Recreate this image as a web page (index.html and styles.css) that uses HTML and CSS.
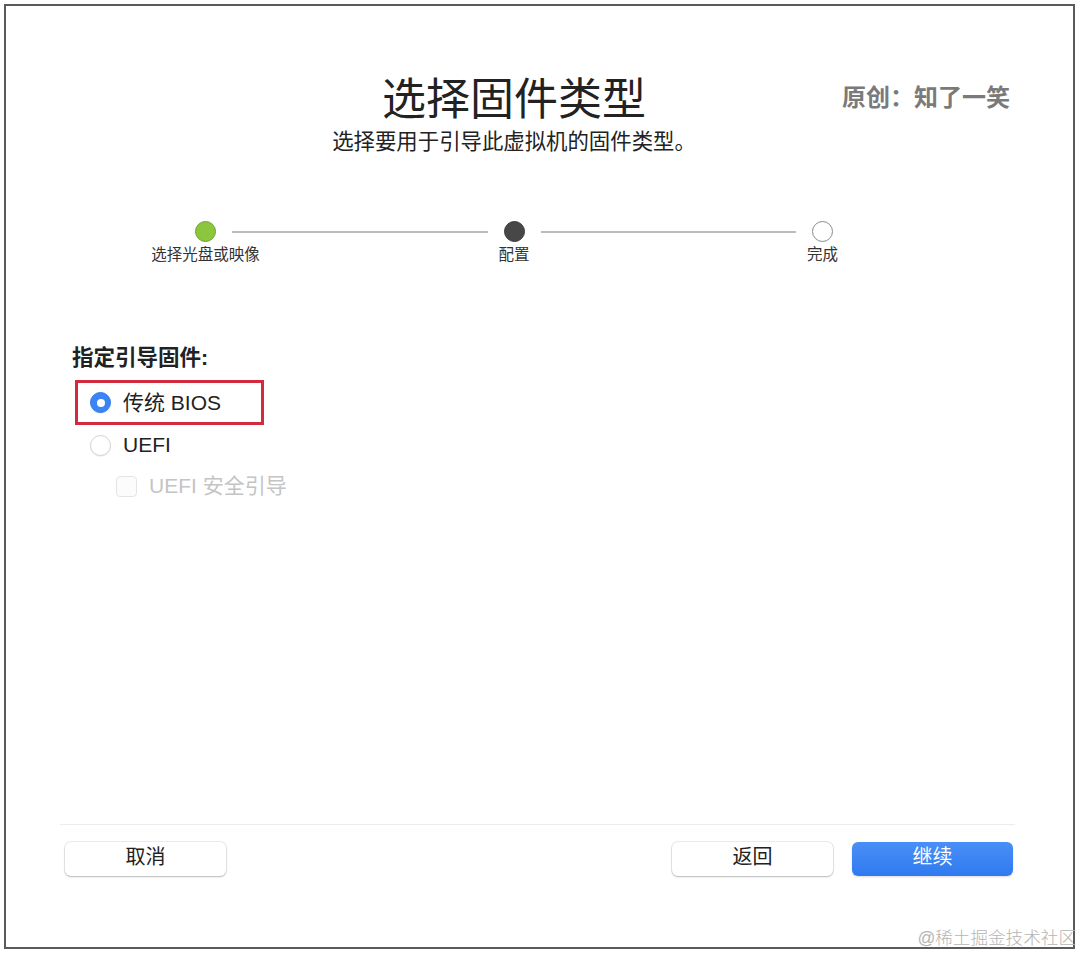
FILE: index.html
```html
<!DOCTYPE html>
<html lang="zh-CN">
<head>
    <meta charset="UTF-8">
    <meta name="viewport" content="width=device-width, initial-scale=1.0">
    <title>选择固件类型</title>
    <link rel="stylesheet" href="styles.css">
</head>
<body>
    <div class="frame">
        <div class="top">
            <header class="head">
                <div></div>
                <h1 class="title">选择固件类型</h1>
                <div class="author">原创：知了一笑</div>
            </header>
            <p class="subtitle">选择要用于引导此虚拟机的固件类型。</p>

            <div class="steps">
                <span class="dot done"></span>
                <span class="line"></span>
                <span class="dot current"></span>
                <span class="line"></span>
                <span class="dot"></span>
                <span class="stepLabel">选择光盘或映像</span>
                <span></span>
                <span class="stepLabel">配置</span>
                <span></span>
                <span class="stepLabel">完成</span>
            </div>
        </div>

        <div class="form">
            <h2 class="formTitle">指定引导固件:</h2>
            <div class="highlight">
                <div class="option">
                    <span class="radio checked"></span>
                    <span>传统 BIOS</span>
                </div>
            </div>
            <div class="option plain">
                <span class="radio"></span>
                <span>UEFI</span>
            </div>
            <div class="option sub disabled">
                <span class="checkbox"></span>
                <span>UEFI 安全引导</span>
            </div>
        </div>

        <footer class="footer">
            <button class="btn">取消</button>
            <div class="spacer"></div>
            <button class="btn">返回</button>
            <button class="btn primary">继续</button>
        </footer>
    </div>
    <div class="watermark">@稀土掘金技术社区</div>
</body>
</html>
```

FILE: styles.css
```css
* {
    margin: 0;
    padding: 0;
    box-sizing: border-box;
    font-family: "Liberation Sans", "Noto Sans CJK SC", sans-serif;
}
body {
    background-color: #fff;
    width: 1082px;
    height: 954px;
    position: relative;
    overflow: hidden;
}
.frame {
    margin: 4px;
    width: 1071px;
    height: 945px;
    border: 2px solid #5a5a5a;
    display: flex;
    flex-direction: column;
    background-color: #fff;
}
.top {
    margin-right: 51px;
    padding-top: 67px;
}
.head {
    display: grid;
    grid-template-columns: 1fr auto 1fr;
    align-items: center;
}
.title {
    font-size: 44px;
    line-height: 54px;
    font-weight: 400;
    color: #222;
}
.author {
    justify-self: end;
    margin-right: 12px;
    font-size: 24px;
    line-height: 30px;
    font-weight: 700;
    color: #7a7a7a;
    margin-top: -4px;
}
.subtitle {
    text-align: center;
    font-size: 21.4px;
    line-height: 28px;
    color: #222;
    margin-top: 1px;
}
.steps {
    width: 638px;
    margin: 65px auto 0;
    display: grid;
    grid-template-columns: 21px 1fr 21px 1fr 21px;
    column-gap: 16px;
    align-items: center;
}
.dot {
    width: 21px;
    height: 21px;
    border-radius: 50%;
    border: 1px solid #8a8a8a;
    background-color: #fff;
}
.dot.done {
    background-color: #8cc63f;
    border-color: #6f9f34;
}
.dot.current {
    background-color: #474747;
    border-color: #3a3a3a;
}
.line {
    height: 2px;
    background-color: #bcbcbc;
}
.stepLabel {
    justify-self: center;
    white-space: nowrap;
    font-size: 15.5px;
    line-height: 20px;
    color: #333;
    margin-top: 3px;
}
.form {
    padding-left: 66px;
    margin-top: 79px;
}
.formTitle {
    font-size: 21.5px;
    line-height: 28px;
    font-weight: 700;
    color: #222;
}
.highlight {
    margin-top: 8px;
    margin-left: 3px;
    width: 189px;
    height: 45px;
    border: 3px solid #d32a3e;
    display: flex;
    align-items: center;
    padding-left: 12px;
}
.option {
    display: flex;
    align-items: center;
    gap: 12px;
    font-size: 21px;
    line-height: 28px;
    color: #222;
}
.option.plain {
    margin-top: 6px;
    padding-left: 18px;
}
.option.sub {
    margin-top: 13px;
    padding-left: 44px;
}
.disabled {
    color: #c4c4c4;
}
.radio {
    width: 21px;
    height: 21px;
    border-radius: 50%;
    border: 1px solid #d2d2d2;
    background-color: #fff;
    box-shadow: 0 1px 1px rgba(0, 0, 0, 0.06);
    display: flex;
    justify-content: center;
    align-items: center;
}
.radio.checked {
    background-color: #3a84f5;
    border-color: #2f78ec;
}
.radio.checked::after {
    content: "";
    width: 8px;
    height: 8px;
    border-radius: 50%;
    background-color: #fff;
}
.checkbox {
    width: 21px;
    height: 21px;
    border-radius: 4px;
    border: 1px solid #e4e4e4;
    background-color: #fcfcfc;
}
.footer {
    margin: auto 58px 0 54px;
    border-top: 1px solid #ececec;
    padding: 17px 2px 71px 5px;
    display: flex;
    gap: 19px;
}
.spacer {
    flex: 1;
}
.btn {
    width: 161px;
    height: 34px;
    border: 0;
    border-radius: 6px;
    background-color: #fff;
    box-shadow: 0 0 0 1px rgba(0, 0, 0, 0.07), 0 1px 2px rgba(0, 0, 0, 0.22);
    font-size: 20px;
    line-height: 30px;
    padding-bottom: 4px;
    color: #222;
}
.btn.primary {
    background: linear-gradient(#4a8ff6, #2f7af0);
    color: #fff;
    box-shadow: 0 1px 2px rgba(0, 0, 0, 0.15);
}
.watermark {
    position: absolute;
    right: 6px;
    bottom: 5px;
    font-size: 17.6px;
    line-height: 22px;
    color: #b5b5b5;
    font-weight: 300;
}
```
